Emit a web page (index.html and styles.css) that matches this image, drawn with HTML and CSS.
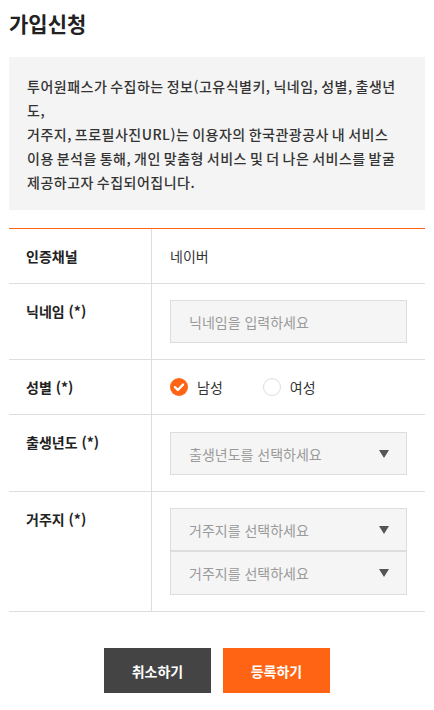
FILE: index.html
```html
<!DOCTYPE html>
<html lang="ko">
<head>
<meta charset="utf-8">
<title>가입신청</title>
<link rel="stylesheet" href="styles.css">
</head>
<body>
<div class="page">
  <h1 class="title">가입신청</h1>
  <div class="notice">투어원패스가 수집하는 정보(고유식별키, 닉네임, 성별, 출생년도,<br>거주지, 프로필사진URL)는 이용자의 한국관광공사 내 서비스 이용 분석을 통해, 개인 맞춤형 서비스 및 더 나은 서비스를 발굴 제공하고자 수집되어집니다.</div>

  <div class="form">
    <div class="row">
      <div class="label">인증채널</div>
      <div class="field"><span class="value">네이버</span></div>
    </div>
    <div class="row">
      <div class="label">닉네임 (*)</div>
      <div class="field"><input class="input" type="text" placeholder="닉네임을 입력하세요"></div>
    </div>
    <div class="row">
      <div class="label">성별 (*)</div>
      <div class="field radios">
        <label class="radio"><span class="dot checked"><svg viewBox="0 0 18 18" width="18" height="18"><path d="M5 9.2 L7.9 12 L13 6.6" fill="none" stroke="#fff" stroke-width="2.4" stroke-linecap="round" stroke-linejoin="round"/></svg></span><span>남성</span></label>
        <label class="radio"><span class="dot"></span><span>여성</span></label>
      </div>
    </div>
    <div class="row">
      <div class="label">출생년도 (*)</div>
      <div class="field field-select"><div class="select"><span>출생년도를 선택하세요</span><span class="arrow"></span></div></div>
    </div>
    <div class="row">
      <div class="label">거주지 (*)</div>
      <div class="field stack">
        <div class="select"><span>거주지를 선택하세요</span><span class="arrow"></span></div>
        <div class="select select-lower"><span>거주지를 선택하세요</span><span class="arrow"></span></div>
      </div>
    </div>
  </div>

  <div class="buttons">
    <button class="btn cancel" type="button">취소하기</button>
    <button class="btn submit" type="button">등록하기</button>
  </div>
</div>
</body>
</html>
```
FILE: styles.css
```css
* { box-sizing: border-box; }
html, body { margin: 0; padding: 0; background: #fff; }
body {
  font-family: "Noto Sans CJK KR", "Noto Sans", sans-serif;
  color: #333;
  font-size: 14px;
}
.page { padding: 0 9px; }
.title {
  margin: 0;
  padding-top: 9px;
  font-size: 21px;
  line-height: 28px;
  font-weight: 700;
  color: #222;
}
.notice {
  margin-top: 20px;
  background: #f4f4f4;
  padding: 17px 26px 16px 18px;
  font-size: 14px;
  line-height: 24px;
  font-weight: 500;
  letter-spacing: 0.5px;
  word-spacing: -1.5px;
  color: #333;
}
.form {
  margin-top: 18px;
  border-top: 1px solid #ff6414;
}
.row {
  display: grid;
  grid-template-columns: 143px 1fr;
  border-bottom: 1px solid #dddddd;
}
.label {
  padding: 16px 0 16px 17px;
  line-height: 22px;
  font-weight: 700;
  color: #222;
  border-right: 1px solid #dddddd;
}
.field {
  padding: 16px 18px 16px 18px;
  line-height: 22px;
}
.field-select { padding-top: 17px; }
.value { color: #333; }
.input {
  display: block;
  width: 100%;
  height: 43px;
  margin: 0;
  border: 1px solid #dddddd;
  background: #f5f5f5;
  padding: 0 18px;
  font-family: inherit;
  font-size: 14px;
  color: #333;
  outline: none;
}
.input::placeholder { color: #9a9a9a; }
.radios { display: flex; align-items: center; gap: 40px; }
.radio { display: flex; align-items: center; gap: 9px; color: #333; }
.dot {
  width: 18px; height: 18px;
  border-radius: 50%;
  border: 1px solid #dddddd;
  background: #fff;
  display: flex; align-items: center; justify-content: center;
}
.dot.checked { border: none; background: #ff6414; }
.dot svg { display: block; }
.stack { display: flex; flex-direction: column; }
.select {
  height: 43px;
  border: 1px solid #dddddd;
  background: #f5f5f5;
  padding: 0 17px 0 18px;
  display: flex; align-items: center; justify-content: space-between;
  color: #9a9a9a;
}
.select-lower { height: 44px; }
.arrow {
  width: 0; height: 0;
  border-left: 5px solid transparent;
  border-right: 5px solid transparent;
  border-top: 8px solid #555;
}
.buttons {
  display: flex;
  justify-content: center;
  gap: 12px;
  margin-top: 36px;
}
.btn {
  width: 107px;
  height: 45px;
  border: none;
  margin: 0;
  font-family: inherit;
  font-size: 14px;
  font-weight: 700;
  color: #fff;
  cursor: pointer;
}
.cancel { background: #444; }
.submit { background: #ff6414; }
```
